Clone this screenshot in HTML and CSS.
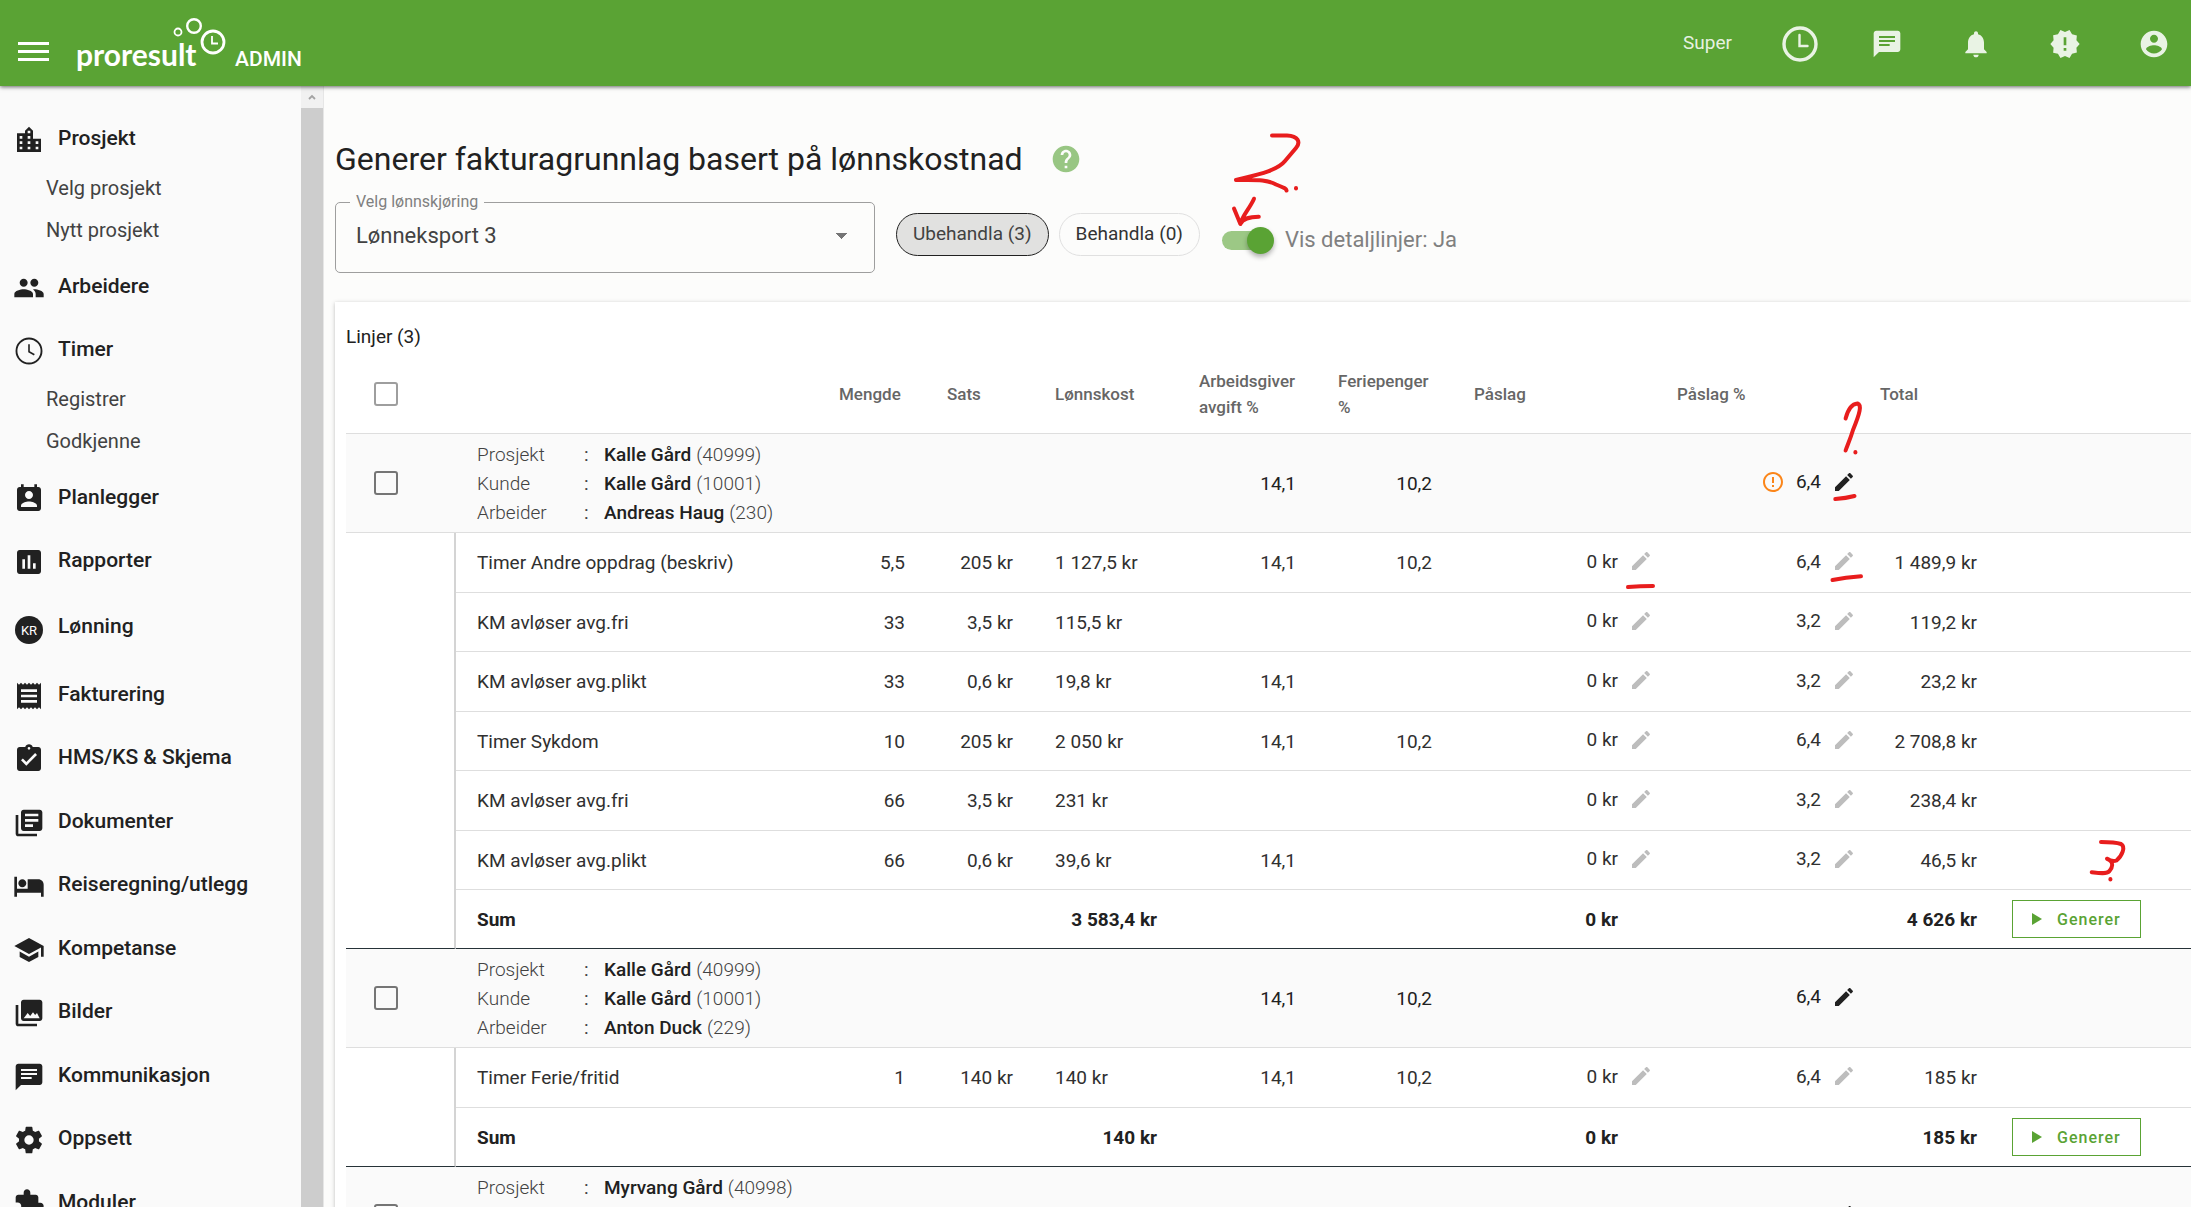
FILE: index.html
```html
<!DOCTYPE html>
<html lang="no">
<head>
    <meta charset="UTF-8">
    <meta name="viewport" content="width=device-width, initial-scale=1.0">
    <title>Proresult Admin</title>
    <link rel="stylesheet" href="styles.css">
</head>
<body>
    <svg class="sprite" aria-hidden="true">
        <symbol id="i-city" viewBox="0 0 24 24"><path d="M19,15H17V13H19M19,19H17V17H19M13,7H11V5H13M13,11H11V9H13M13,15H11V13H13M13,19H11V17H13M7,11H5V9H7M7,15H5V13H7M7,19H5V17H7M15,11V5L12,2L9,5V7H3V21H21V11H15Z"/></symbol>
        <symbol id="i-people" viewBox="0 0 24 24"><path d="M16 11c1.66 0 2.99-1.34 2.99-3S17.66 5 16 5c-1.66 0-3 1.34-3 3s1.34 3 3 3zm-8 0c1.66 0 2.99-1.34 2.99-3S9.66 5 8 5C6.34 5 5 6.34 5 8s1.34 3 3 3zm0 2c-2.33 0-7 1.17-7 3.5V19h14v-2.5c0-2.33-4.67-3.5-7-3.5zm8 0c-.29 0-.62.02-.97.05 1.16.84 1.97 1.97 1.97 3.45V19h6v-2.5c0-2.33-4.67-3.5-7-3.5z"/></symbol>
        <symbol id="i-clock" viewBox="0 0 24 24"><circle cx="12" cy="12" r="9.4" fill="none" stroke="currentColor" stroke-width="1.4"/><path d="M12 7v5.500l4 2.300" fill="none" stroke="currentColor" stroke-width="1.200"/></symbol>
        <symbol id="i-contact" viewBox="0 0 24 24"><path d="M19 3h-1V1h-2v2H8V1H6v2H5c-1.11 0-2 .9-2 2v14c0 1.1.89 2 2 2h14c1.1 0 2-.9 2-2V5c0-1.1-.9-2-2-2zm-7 3c1.66 0 3 1.34 3 3s-1.34 3-3 3-3-1.34-3-3 1.34-3 3-3zm6 12H6v-1c0-2 4-3.1 6-3.1s6 1.1 6 3.1v1z"/></symbol>
        <symbol id="i-chart" viewBox="0 0 24 24"><path d="M19 3H5c-1.1 0-2 .9-2 2v14c0 1.1.9 2 2 2h14c1.1 0 2-.9 2-2V5c0-1.1-.9-2-2-2zM9 17H7v-7h2v7zm4 0h-2V7h2v10zm4 0h-2v-4h2v4z"/></symbol>
        <symbol id="i-receipt" viewBox="0 0 24 24"><path d="M18 17H6v-2h12v2zm0-4H6v-2h12v2zm0-4H6V7h12v2zM3 22l1.5-1.5L6 22l1.5-1.5L9 22l1.5-1.5L12 22l1.5-1.5L15 22l1.5-1.5L18 22l1.5-1.5L21 22V2l-1.5 1.5L18 2l-1.5 1.5L15 2l-1.5 1.5L12 2l-1.5 1.5L9 2 7.5 3.5 6 2 4.5 3.5 3 2v20z"/></symbol>
        <symbol id="i-task" viewBox="0 0 24 24"><path d="M19 3h-4.18C14.4 1.84 13.3 1 12 1c-1.3 0-2.4.84-2.82 2H5c-1.1 0-2 .9-2 2v14c0 1.1.9 2 2 2h14c1.1 0 2-.9 2-2V5c0-1.1-.9-2-2-2zm-7 0c.55 0 1 .45 1 1s-.45 1-1 1-1-.45-1-1 .45-1 1-1zm-2 14l-4-4 1.41-1.41L10 14.17l6.59-6.59L18 9l-8 8z"/></symbol>
        <symbol id="i-books" viewBox="0 0 24 24"><path d="M4 6H2v14c0 1.1.9 2 2 2h14v-2H4V6zm16-4H8c-1.1 0-2 .9-2 2v12c0 1.1.9 2 2 2h12c1.1 0 2-.9 2-2V4c0-1.1-.9-2-2-2zm-1 9H9V9h10v2zm-4 4H9v-2h6v2zm4-8H9V5h10v2z"/></symbol>
        <symbol id="i-hotel" viewBox="0 0 24 24"><path d="M7 13c1.66 0 3-1.34 3-3S8.66 7 7 7s-3 1.34-3 3 1.34 3 3 3zm12-6h-8v7H3V5H1v15h2v-3h18v3h2v-9c0-2.21-1.79-4-4-4z"/></symbol>
        <symbol id="i-school" viewBox="0 0 24 24"><path d="M5 13.18v4L12 21l7-3.82v-4L12 17l-7-3.82zM12 3L1 9l11 6 9-4.91V17h2V9L12 3z"/></symbol>
        <symbol id="i-images" viewBox="0 0 24 24"><path d="M22 16V4c0-1.1-.9-2-2-2H8c-1.1 0-2 .9-2 2v12c0 1.1.9 2 2 2h12c1.1 0 2-.9 2-2zM8 16l3-4 1.9 2.3L15 11.5l1.6 2L18 12l2 4H8zM2 6v14c0 1.1.9 2 2 2h14v-2H4V6H2z"/></symbol>
        <symbol id="i-chat" viewBox="0 0 24 24"><path d="M20 2H4c-1.1 0-1.99.9-1.99 2L2 22l4-4h14c1.1 0 2-.9 2-2V4c0-1.1-.9-2-2-2zM6 9h12v1.500H6V9zm8 4.500H6v-1.500h8v1.500zm4-6H6V6h12v1.500z"/></symbol>
        <symbol id="i-cog" viewBox="0 0 24 24"><path d="M12,15.5A3.5,3.5 0 0,1 8.5,12A3.5,3.5 0 0,1 12,8.5A3.5,3.5 0 0,1 15.5,12A3.5,3.5 0 0,1 12,15.5M19.43,12.97C19.47,12.65 19.5,12.33 19.5,12C19.5,11.67 19.47,11.34 19.43,11L21.54,9.37C21.73,9.22 21.78,8.95 21.66,8.73L19.66,5.27C19.54,5.05 19.27,4.96 19.05,5.05L16.56,6.05C16.04,5.66 15.5,5.32 14.87,5.07L14.5,2.42C14.46,2.18 14.25,2 14,2H10C9.75,2 9.54,2.18 9.5,2.42L9.13,5.07C8.5,5.32 7.96,5.66 7.44,6.05L4.95,5.05C4.73,4.96 4.46,5.05 4.34,5.27L2.34,8.73C2.21,8.95 2.27,9.22 2.46,9.37L4.57,11C4.53,11.34 4.5,11.67 4.5,12C4.5,12.33 4.53,12.65 4.57,12.97L2.46,14.63C2.27,14.78 2.21,15.05 2.34,15.27L4.34,18.73C4.46,18.95 4.73,19.03 4.95,18.95L7.44,17.94C7.96,18.34 8.5,18.68 9.13,18.93L9.5,21.58C9.54,21.82 9.75,22 10,22H14C14.25,22 14.46,21.82 14.5,21.58L14.87,18.93C15.5,18.67 16.04,18.34 16.56,17.94L19.05,18.95C19.27,19.03 19.54,18.95 19.66,18.73L21.66,15.27C21.78,15.05 21.73,14.78 21.54,14.63L19.43,12.97Z"/></symbol>
        <symbol id="i-extension" viewBox="0 0 24 24"><path d="M20.500 11H19V7c0-1.1-.9-2-2-2h-4V3.500C13 2.120 11.880 1 10.500 1S8 2.120 8 3.500V5H4c-1.1 0-1.99.9-1.99 2v3.800H3.500c1.490 0 2.700 1.210 2.700 2.700s-1.210 2.700-2.700 2.700H2V20c0 1.100.9 2 2 2h3.800v-1.500c0-1.490 1.210-2.700 2.700-2.700 1.490 0 2.700 1.210 2.700 2.700V22H17c1.100 0 2-.9 2-2v-4h1.500c1.380 0 2.500-1.120 2.500-2.500S21.880 11 20.500 11z"/></symbol>
        <symbol id="i-bell" viewBox="0 0 24 24"><path d="M12 22c1.1 0 2-.9 2-2h-4c0 1.1.89 2 2 2zm6-6v-5c0-3.07-1.64-5.64-4.5-6.32V4c0-.83-.67-1.5-1.5-1.5s-1.5.67-1.5 1.5v.68C7.63 5.36 6 7.92 6 11v5l-2 2v1h16v-1l-2-2z"/></symbol>
        <symbol id="i-release" viewBox="0 0 24 24"><path d="M23 12l-2.44-2.78.34-3.68-3.61-.82-1.89-3.18L12 3 8.600 1.540 6.710 4.720l-3.610.81.34 3.680L1 12l2.440 2.780-.34 3.690 3.610.82 1.890 3.180L12 21l3.400 1.460 1.890-3.180 3.610-.82-.34-3.680L23 12zm-10 5h-2v-2h2v2zm0-4h-2V7h2v6z"/></symbol>
        <symbol id="i-account" viewBox="0 0 24 24"><path d="M12 2C6.48 2 2 6.48 2 12s4.48 10 10 10 10-4.48 10-10S17.52 2 12 2zm0 3c1.66 0 3 1.34 3 3s-1.34 3-3 3-3-1.34-3-3 1.34-3 3-3zm0 14.2c-2.5 0-4.71-1.28-6-3.22.03-1.99 4-3.08 6-3.08 1.99 0 5.97 1.09 6 3.08-1.29 1.94-3.5 3.22-6 3.22z"/></symbol>
        <symbol id="i-help" viewBox="0 0 24 24"><path d="M12 2C6.48 2 2 6.48 2 12s4.48 10 10 10 10-4.48 10-10S17.52 2 12 2zm1 17h-2v-2h2v2zm2.07-7.75l-.9.92C13.45 12.9 13 13.5 13 15h-2v-.5c0-1.1.45-2.1 1.17-2.83l1.24-1.26c.37-.36.59-.86.59-1.41 0-1.1-.9-2-2-2s-2 .9-2 2H8c0-2.21 1.79-4 4-4s4 1.79 4 4c0 .88-.36 1.68-.93 2.25z"/></symbol>
        <symbol id="i-alert" viewBox="0 0 24 24"><path d="M11 15h2v2h-2zm0-8h2v6h-2zm.99-5C6.47 2 2 6.48 2 12s4.47 10 9.99 10C17.52 22 22 17.52 22 12S17.52 2 11.99 2zM12 20c-4.42 0-8-3.58-8-8s3.58-8 8-8 8 3.58 8 8-3.58 8-8 8z"/></symbol>
        <symbol id="i-edit" viewBox="0 0 24 24"><path d="M3 17.25V21h3.75L17.81 9.94l-3.75-3.75L3 17.25zM20.71 7.04c.39-.39.39-1.02 0-1.41l-2.34-2.34c-.39-.39-1.02-.39-1.41 0l-1.83 1.83 3.75 3.75 1.83-1.83z"/></symbol>
        <symbol id="i-play" viewBox="0 0 10 12"><path d="M0 0v12l10-6z"/></symbol>
    </svg>

    <header class="topbar">
        <button class="icon-btn menu-btn" aria-label="Meny"><span></span><span></span><span></span></button>
        <a class="brand" href="#" aria-label="Proresult admin">
            <svg class="logo" viewBox="0 0 150 51">
                <text class="logo-text" x="0" y="51">proresult</text>
                <g fill="none" stroke="#fff">
                    <circle cx="102" cy="17" r="3.500" stroke-width="1.800"/>
                    <circle cx="118" cy="11" r="6.800" stroke-width="2.400"/>
                    <circle cx="137" cy="27" r="11" stroke-width="2.800"/>
                    <path d="M136 21v7.500h6" stroke-width="1.800"/>
                </g>
            </svg>
            <span class="brand-role">ADMIN</span>
        </a>
        <div class="topbar-actions">
            <span class="user-name">Super</span>
            <button class="icon-btn stamp-btn" aria-label="Stemple">
                <svg class="stamp" viewBox="0 0 36 36"><circle cx="18" cy="18" r="16" fill="none" stroke="currentColor" stroke-width="3.400"/><path d="M17.500 9v11h8" fill="none" stroke="currentColor" stroke-width="2.400" stroke-linecap="round"/></svg>
            </button>
            <button class="icon-btn" aria-label="Meldinger"><svg class="icon"><use href="#i-chat"/></svg></button>
            <button class="icon-btn" aria-label="Varsler"><svg class="icon"><use href="#i-bell"/></svg></button>
            <button class="icon-btn" aria-label="Nyheter"><svg class="icon"><use href="#i-release"/></svg></button>
            <button class="icon-btn" aria-label="Konto"><svg class="icon"><use href="#i-account"/></svg></button>
        </div>
    </header>

    <div class="layout">
        <nav class="sidebar">
            <ul class="menu">
                <li>
                    <a class="menu-item" href="#"><svg class="icon"><use href="#i-city"/></svg>Prosjekt</a>
                    <ul class="submenu">
                        <li><a href="#">Velg prosjekt</a></li>
                        <li><a href="#">Nytt prosjekt</a></li>
                    </ul>
                </li>
                <li><a class="menu-item" href="#"><svg class="icon"><use href="#i-people"/></svg>Arbeidere</a></li>
                <li>
                    <a class="menu-item" href="#"><svg class="icon"><use href="#i-clock"/></svg>Timer</a>
                    <ul class="submenu">
                        <li><a href="#">Registrer</a></li>
                        <li><a href="#">Godkjenne</a></li>
                    </ul>
                </li>
                <li><a class="menu-item" href="#"><svg class="icon"><use href="#i-contact"/></svg>Planlegger</a></li>
                <li><a class="menu-item" href="#"><svg class="icon"><use href="#i-chart"/></svg>Rapporter</a></li>
                <li><a class="menu-item menu-item-tall" href="#"><span class="kr-icon">KR</span>Lønning</a></li>
                <li><a class="menu-item" href="#"><svg class="icon"><use href="#i-receipt"/></svg>Fakturering</a></li>
                <li><a class="menu-item" href="#"><svg class="icon"><use href="#i-task"/></svg>HMS/KS &amp; Skjema</a></li>
                <li><a class="menu-item" href="#"><svg class="icon"><use href="#i-books"/></svg>Dokumenter</a></li>
                <li><a class="menu-item" href="#"><svg class="icon"><use href="#i-hotel"/></svg>Reiseregning/utlegg</a></li>
                <li><a class="menu-item" href="#"><svg class="icon"><use href="#i-school"/></svg>Kompetanse</a></li>
                <li><a class="menu-item" href="#"><svg class="icon"><use href="#i-images"/></svg>Bilder</a></li>
                <li><a class="menu-item" href="#"><svg class="icon"><use href="#i-chat"/></svg>Kommunikasjon</a></li>
                <li><a class="menu-item" href="#"><svg class="icon"><use href="#i-cog"/></svg>Oppsett</a></li>
                <li><a class="menu-item" href="#"><svg class="icon"><use href="#i-extension"/></svg>Moduler</a></li>
            </ul>
            <div class="scrollbar" aria-hidden="true">
                <svg class="scroll-up" viewBox="0 0 8 6"><path d="M1 5l3-3 3 3" fill="none" stroke="#a3a3a3" stroke-width="1.800"/></svg>
            </div>
        </nav>

        <main class="content">
            <div class="page-title">
                <h1>Generer fakturagrunnlag basert på lønnskostnad</h1>
                <button class="icon-btn help-btn" aria-label="Hjelp"><svg class="icon"><use href="#i-help"/></svg></button>
            </div>

            <div class="filters">
                <div class="field">
                    <label for="run">Velg lønnskjøring</label>
                    <select id="run">
                        <option>Lønneksport 3</option>
                    </select>
                </div>
                <div class="chips">
                    <button class="chip chip-active">Ubehandla (3)</button>
                    <button class="chip">Behandla (0)</button>
                </div>
                <label class="switch">
                    <input type="checkbox" checked>
                    Vis detaljlinjer: Ja
                </label>
            </div>

            <section class="card">
                <p class="card-title">Linjer (3)</p>
                <table>
                    <colgroup>
                        <col class="c-check"><col><col class="c-qty"><col class="c-qty"><col class="c-cost">
                        <col class="c-tax"><col class="c-holiday"><col class="c-edit"><col class="c-edit">
                        <col class="c-tax"><col class="c-action">
                    </colgroup>
                    <thead>
                        <tr>
                            <th class="check"><input type="checkbox" aria-label="Velg alle"></th>
                            <th></th>
                            <th>Mengde</th>
                            <th>Sats</th>
                            <th>Lønnskost</th>
                            <th>Arbeidsgiver avgift&nbsp;%</th>
                            <th>Feriepenger %</th>
                            <th>Påslag</th>
                            <th>Påslag %</th>
                            <th>Total</th>
                            <th></th>
                        </tr>
                    </thead>
                    <tbody>
                        <tr class="group">
                            <td class="check"><input type="checkbox" aria-label="Velg Andreas Haug"></td>
                            <td colspan="4">
                                <dl>
                                    <dt>Prosjekt</dt><dd><b>Kalle Gård</b> (40999)</dd>
                                    <dt>Kunde</dt><dd><b>Kalle Gård</b> (10001)</dd>
                                    <dt>Arbeider</dt><dd><b>Andreas Haug</b> (230)</dd>
                                </dl>
                            </td>
                            <td class="num">14,1</td>
                            <td class="num">10,2</td>
                            <td></td>
                            <td><div class="editable"><svg class="icon warn"><use href="#i-alert"/></svg>6,4 <button class="icon-btn edit" aria-label="Rediger"><svg class="icon"><use href="#i-edit"/></svg></button></div></td>
                            <td></td>
                            <td></td>
                        </tr>
                        <tr class="line">
                            <td class="rail" rowspan="7"></td>
                            <td>Timer Andre oppdrag (beskriv)</td>
                            <td class="num">5,5</td>
                            <td class="num">205 kr</td>
                            <td>1 127,5 kr</td>
                            <td class="num">14,1</td>
                            <td class="num">10,2</td>
                            <td><div class="editable">0 kr <button class="icon-btn edit" aria-label="Rediger"><svg class="icon"><use href="#i-edit"/></svg></button></div></td>
                            <td><div class="editable">6,4 <button class="icon-btn edit" aria-label="Rediger"><svg class="icon"><use href="#i-edit"/></svg></button></div></td>
                            <td class="num">1 489,9 kr</td>
                            <td></td>
                        </tr>
                        <tr class="line">
                            <td>KM avløser avg.fri</td>
                            <td class="num">33</td>
                            <td class="num">3,5 kr</td>
                            <td>115,5 kr</td>
                            <td></td>
                            <td></td>
                            <td><div class="editable">0 kr <button class="icon-btn edit" aria-label="Rediger"><svg class="icon"><use href="#i-edit"/></svg></button></div></td>
                            <td><div class="editable">3,2 <button class="icon-btn edit" aria-label="Rediger"><svg class="icon"><use href="#i-edit"/></svg></button></div></td>
                            <td class="num">119,2 kr</td>
                            <td></td>
                        </tr>
                        <tr class="line">
                            <td>KM avløser avg.plikt</td>
                            <td class="num">33</td>
                            <td class="num">0,6 kr</td>
                            <td>19,8 kr</td>
                            <td class="num">14,1</td>
                            <td></td>
                            <td><div class="editable">0 kr <button class="icon-btn edit" aria-label="Rediger"><svg class="icon"><use href="#i-edit"/></svg></button></div></td>
                            <td><div class="editable">3,2 <button class="icon-btn edit" aria-label="Rediger"><svg class="icon"><use href="#i-edit"/></svg></button></div></td>
                            <td class="num">23,2 kr</td>
                            <td></td>
                        </tr>
                        <tr class="line">
                            <td>Timer Sykdom</td>
                            <td class="num">10</td>
                            <td class="num">205 kr</td>
                            <td>2 050 kr</td>
                            <td class="num">14,1</td>
                            <td class="num">10,2</td>
                            <td><div class="editable">0 kr <button class="icon-btn edit" aria-label="Rediger"><svg class="icon"><use href="#i-edit"/></svg></button></div></td>
                            <td><div class="editable">6,4 <button class="icon-btn edit" aria-label="Rediger"><svg class="icon"><use href="#i-edit"/></svg></button></div></td>
                            <td class="num">2 708,8 kr</td>
                            <td></td>
                        </tr>
                        <tr class="line">
                            <td>KM avløser avg.fri</td>
                            <td class="num">66</td>
                            <td class="num">3,5 kr</td>
                            <td>231 kr</td>
                            <td></td>
                            <td></td>
                            <td><div class="editable">0 kr <button class="icon-btn edit" aria-label="Rediger"><svg class="icon"><use href="#i-edit"/></svg></button></div></td>
                            <td><div class="editable">3,2 <button class="icon-btn edit" aria-label="Rediger"><svg class="icon"><use href="#i-edit"/></svg></button></div></td>
                            <td class="num">238,4 kr</td>
                            <td></td>
                        </tr>
                        <tr class="line">
                            <td>KM avløser avg.plikt</td>
                            <td class="num">66</td>
                            <td class="num">0,6 kr</td>
                            <td>39,6 kr</td>
                            <td class="num">14,1</td>
                            <td></td>
                            <td><div class="editable">0 kr <button class="icon-btn edit" aria-label="Rediger"><svg class="icon"><use href="#i-edit"/></svg></button></div></td>
                            <td><div class="editable">3,2 <button class="icon-btn edit" aria-label="Rediger"><svg class="icon"><use href="#i-edit"/></svg></button></div></td>
                            <td class="num">46,5 kr</td>
                            <td></td>
                        </tr>
                        <tr class="sum">
                            <td>Sum</td>
                            <td></td>
                            <td></td>
                            <td class="num">3 583,4 kr</td>
                            <td></td>
                            <td></td>
                            <td class="num sum-markup">0 kr</td>
                            <td></td>
                            <td class="num">4 626 kr</td>
                            <td class="action"><button class="generate"><svg><use href="#i-play"/></svg>Generer</button></td>
                        </tr>
                    </tbody>
                    <tbody>
                        <tr class="group">
                            <td class="check"><input type="checkbox" aria-label="Velg Anton Duck"></td>
                            <td colspan="4">
                                <dl>
                                    <dt>Prosjekt</dt><dd><b>Kalle Gård</b> (40999)</dd>
                                    <dt>Kunde</dt><dd><b>Kalle Gård</b> (10001)</dd>
                                    <dt>Arbeider</dt><dd><b>Anton Duck</b> (229)</dd>
                                </dl>
                            </td>
                            <td class="num">14,1</td>
                            <td class="num">10,2</td>
                            <td></td>
                            <td><div class="editable">6,4 <button class="icon-btn edit" aria-label="Rediger"><svg class="icon"><use href="#i-edit"/></svg></button></div></td>
                            <td></td>
                            <td></td>
                        </tr>
                        <tr class="line">
                            <td class="rail" rowspan="2"></td>
                            <td>Timer Ferie/fritid</td>
                            <td class="num">1</td>
                            <td class="num">140 kr</td>
                            <td>140 kr</td>
                            <td class="num">14,1</td>
                            <td class="num">10,2</td>
                            <td><div class="editable">0 kr <button class="icon-btn edit" aria-label="Rediger"><svg class="icon"><use href="#i-edit"/></svg></button></div></td>
                            <td><div class="editable">6,4 <button class="icon-btn edit" aria-label="Rediger"><svg class="icon"><use href="#i-edit"/></svg></button></div></td>
                            <td class="num">185 kr</td>
                            <td></td>
                        </tr>
                        <tr class="sum">
                            <td>Sum</td>
                            <td></td>
                            <td></td>
                            <td class="num">140 kr</td>
                            <td></td>
                            <td></td>
                            <td class="num sum-markup">0 kr</td>
                            <td></td>
                            <td class="num">185 kr</td>
                            <td class="action"><button class="generate"><svg><use href="#i-play"/></svg>Generer</button></td>
                        </tr>
                    </tbody>
                    <tbody>
                        <tr class="group">
                            <td class="check"><input type="checkbox" aria-label="Velg Myrvang Gård"></td>
                            <td colspan="4">
                                <dl>
                                    <dt>Prosjekt</dt><dd><b>Myrvang Gård</b> (40998)</dd>
                                </dl>
                            </td>
                            <td></td>
                            <td></td>
                            <td></td>
                            <td><div class="editable">6,4 <button class="icon-btn edit" aria-label="Rediger"><svg class="icon"><use href="#i-edit"/></svg></button></div></td>
                            <td></td>
                            <td></td>
                        </tr>
                    </tbody>
                </table>
            </section>
        </main>
    </div>

    <!-- red pen notes over the page -->
    <svg class="notes" aria-hidden="true">
        <g class="pen">
            <path d="M1845.600 418.500C1848 409 1852 404 1857.500 403.500C1862 405 1860 413 1853 430C1850 440 1847 446 1845.600 450.500"/>
            <path d="M1855.400 452v.5"/>
            <path d="M1835.300 499C1843 498.500 1849 497.500 1854.500 496"/>
            <path d="M1832.500 580C1842 578 1850 577 1861 576.300"/>
            <path d="M1628 587Q1640 586 1653 586"/>
            <path d="M1272 135.500H1287C1298 136 1301 142 1296 148L1285 161C1277 171 1256 175 1236 180C1256 180 1266 179 1276 184.500C1283 187.500 1286 188 1286.500 190.500"/>
            <path d="M1296 188v.5"/>
            <path d="M1254 198.700C1250 208 1242 216 1240.400 224L1234 208.500M1240.400 224C1243 218 1250 217 1258.800 216.700"/>
            <path d="M2101 842C2108 842 2115 842 2121 844C2126 847 2122 856 2116.500 860.500C2113 862 2109 860 2107 858.700C2115 862 2112 868 2109.500 871C2106 874.500 2098 873 2091.700 872.300"/>
            <path d="M2110.400 879v.5"/>
        </g>
    </svg>
</body>
</html>
```
FILE: styles.css
```css
* {
    box-sizing: border-box;
}
body {
    margin: 0;
    height: 100vh;
    display: flex;
    flex-direction: column;
    overflow: hidden;
    background: #fcfcfb;
    color: #212121;
    font-family: Roboto, "Liberation Sans", sans-serif;
    font-size: 19px;
}
ul, dl, dd, p, h1 {
    margin: 0;
    padding: 0;
}
ul {
    list-style: none;
}
a {
    color: inherit;
    text-decoration: none;
}
button {
    font-family: inherit;
    cursor: pointer;
}
.sprite {
    display: none;
}
.icon {
    width: 32px;
    height: 32px;
    fill: currentColor;
    flex: none;
}
.icon-btn {
    display: flex;
    align-items: center;
    justify-content: center;
    padding: 0;
    border: 0;
    background: none;
    color: inherit;
}

/* top bar */
.topbar {
    position: relative;
    z-index: 2;
    flex: none;
    display: flex;
    align-items: center;
    height: 86px;
    padding: 0 19px 0 18px;
    background: #5aa334;
    color: #fff;
    box-shadow: 0 1px 4px rgba(0, 0, 0, 0.6);
}
.menu-btn {
    flex-direction: column;
    gap: 5px;
    width: 31px;
    padding-top: 16px;
}
.menu-btn span {
    width: 31px;
    height: 3px;
    background: #fff;
}
.brand {
    display: flex;
    align-items: baseline;
    gap: 9px;
    margin-left: 27px;
}
.logo {
    width: 150px;
    height: 51px;
    overflow: visible;
}
.logo-text {
    font-family: Lato, sans-serif;
    font-size: 30px;
    font-weight: 700;
    fill: #fff;
}
.brand-role {
    font-size: 21px;
    font-weight: 500;
}
.topbar-actions {
    display: flex;
    align-items: center;
    gap: 52px;
    margin-left: auto;
    padding-top: 2px;
    color: rgba(255, 255, 255, 0.87);
}
.user-name {
    padding-bottom: 3px;
}
.topbar-actions .icon-btn {
    width: 37px;
}
.topbar-actions .stamp-btn {
    width: 32px;
}
.stamp {
    flex: none;
    width: 36px;
    height: 36px;
}

/* side menu */
.layout {
    flex: 1;
    display: flex;
    min-height: 0;
}
.sidebar {
    flex: none;
    display: flex;
    width: 324px;
    overflow: hidden;
    background: #fafafa;
    border-right: 1px solid #e6e6e6;
}
.menu {
    flex: 1;
    display: flex;
    flex-direction: column;
    gap: 6px;
    padding-top: 23px;
}
.menu > li:nth-child(2n+6) {
    padding-bottom: 1px;
}
.menu-item {
    display: flex;
    align-items: center;
    gap: 13px;
    height: 57px;
    padding-left: 13px;
    font-size: 21px;
    font-weight: 500;
}
.menu-item-tall {
    height: 64px;
}
.menu-item .icon {
    margin-top: 4px;
}
.kr-icon {
    display: flex;
    align-items: center;
    justify-content: center;
    width: 28px;
    height: 28px;
    margin: 8px 2px 0;
    border-radius: 50%;
    background: #212121;
    color: #fff;
    font-size: 13px;
    font-weight: 400;
}
.submenu a {
    display: block;
    padding-left: 46px;
    font-size: 20px;
    line-height: 42px;
    color: #424242;
}
.submenu {
    padding-top: 1px;
}
.scrollbar {
    width: 22px;
    background: #cdcdcd;
}
.scroll-up {
    display: block;
    width: 22px;
    height: 22px;
    padding: 7px;
    background: #f1f1f1;
}

/* content */
.content {
    flex: 1;
    min-width: 0;
    overflow: hidden;
    padding: 51px 0 0 11px;
}
.page-title {
    display: flex;
    align-items: center;
    gap: 27px;
    height: 44px;
}
.page-title h1 {
    font-size: 32px;
    font-weight: 400;
}
.help-btn {
    color: #98c683;
}
.filters {
    display: flex;
    align-items: flex-start;
    margin-top: 21px;
}
.field {
    position: relative;
    width: 540px;
}
.field label {
    position: absolute;
    top: -10px;
    left: 15px;
    padding: 0 6px;
    background: #fcfcfb;
    color: #808080;
    font-size: 16px;
    line-height: 20px;
}
.field select {
    appearance: none;
    display: block;
    width: 100%;
    height: 71px;
    padding: 0 20px 4px;
    border: 1px solid #9e9e9e;
    border-radius: 5px;
    background: linear-gradient(to bottom right, #757575 50%, transparent 50%) no-repeat right 26px top 30px / 6px 6px,
        linear-gradient(to bottom left, #757575 50%, transparent 50%) no-repeat right 32px top 30px / 6px 6px;
    color: #424242;
    font-family: inherit;
    font-size: 22px;
}
.chips {
    display: flex;
    gap: 10px;
    margin: 11px 22px 0 21px;
}
.chip {
    height: 43px;
    padding: 0 16px 2px;
    border: 1px solid #e0e0e0;
    border-radius: 22px;
    background: #fcfcfb;
    color: #333;
    font-size: 19px;
}
.chip-active {
    border-color: #212121;
    background: #e1e1e0;
    color: #424242;
}
.switch {
    display: flex;
    align-items: center;
    gap: 15px;
    margin-top: 24px;
    color: #808080;
    font-size: 22px;
    line-height: 28px;
}
.switch input {
    appearance: none;
    position: relative;
    width: 48px;
    height: 19px;
    margin: 0;
    border-radius: 10px;
    background: #9cc885;
}
.switch input::after {
    content: "";
    position: absolute;
    top: -4px;
    right: -4px;
    width: 27px;
    height: 27px;
    border-radius: 50%;
    background: #5aa334;
    box-shadow: 0 3px 5px rgba(0, 0, 0, 0.3);
}

/* table card */
.card {
    margin-top: 29px;
    padding: 17px 0 0 11px;
    background: #fff;
    box-shadow: 0 1px 4px rgba(0, 0, 0, 0.25);
}
.card-title {
    line-height: 35px;
}
table {
    width: 100%;
    table-layout: fixed;
    border-collapse: separate;
    border-spacing: 0;
}
.c-check {
    width: 110px;
}
.c-qty {
    width: 108px;
}
.c-cost {
    width: 144px;
}
.c-tax {
    width: 139px;
}
.c-holiday {
    width: 136px;
}
.c-edit {
    width: 203px;
}
.c-action {
    width: 193px;
}
th, td {
    padding: 0 21px;
    border-bottom: 1px solid #dedede;
    text-align: left;
    white-space: nowrap;
}
th {
    height: 80px;
    color: #666;
    font-size: 17px;
    font-weight: 500;
    line-height: 26px;
    white-space: normal;
}
.check {
    padding-left: 28px;
}
.check input {
    appearance: none;
    display: block;
    width: 24px;
    height: 24px;
    margin: 0;
    border: 2px solid #757575;
    border-radius: 3px;
}
th.check input {
    border-color: #9e9e9e;
}
.num {
    text-align: right;
}
.group td {
    height: 99px;
    background: #fafafa;
}
.group dl {
    display: grid;
    grid-template-columns: 107px 1fr;
    align-content: start;
    height: 87px;
    color: #424242;
    font-weight: 300;
    line-height: 29px;
}
.group dd {
    display: flex;
    gap: 5px;
}
.group dd::before {
    content: ":";
    width: 15px;
    font-weight: 400;
}
.group b {
    color: #212121;
    font-weight: 500;
}
.line td {
    height: 59px;
    color: #303030;
}
.line:nth-child(even) td {
    height: 60px;
}
.rail {
    border-right: 2px solid #d4d4d4;
}
.line .rail {
    border-bottom-color: #263238;
}
.sum td {
    height: 59px;
    border-bottom-color: #263238;
    font-weight: 700;
}
.sum .sum-markup {
    padding-right: 38px;
}
.editable {
    display: flex;
    align-items: center;
    justify-content: flex-end;
    gap: 11px;
    margin-right: -18px;
    padding-bottom: 3px;
}
.editable .icon {
    width: 24px;
    height: 24px;
}
.edit {
    color: #bdbdbd;
}
.group .edit {
    color: #212121;
}
.editable .warn {
    color: #fb8519;
}
.sum .action {
    padding: 0 14px;
}
.generate {
    display: flex;
    align-items: center;
    gap: 15px;
    width: 129px;
    height: 38px;
    padding: 0 19px;
    border: 1px solid #5aa334;
    background: #fff;
    color: #5aa334;
    font-size: 16px;
    font-weight: 500;
    letter-spacing: 1px;
}
.generate svg {
    flex: none;
    width: 10px;
    height: 12px;
    fill: currentColor;
}

.notes {
    position: absolute;
    z-index: 3;
    top: 0;
    left: 0;
    width: 100%;
    height: 100%;
    pointer-events: none;
}
.pen path {
    fill: none;
    stroke: #e81d1d;
    stroke-width: 4;
    stroke-linecap: round;
    stroke-linejoin: round;
}
```
